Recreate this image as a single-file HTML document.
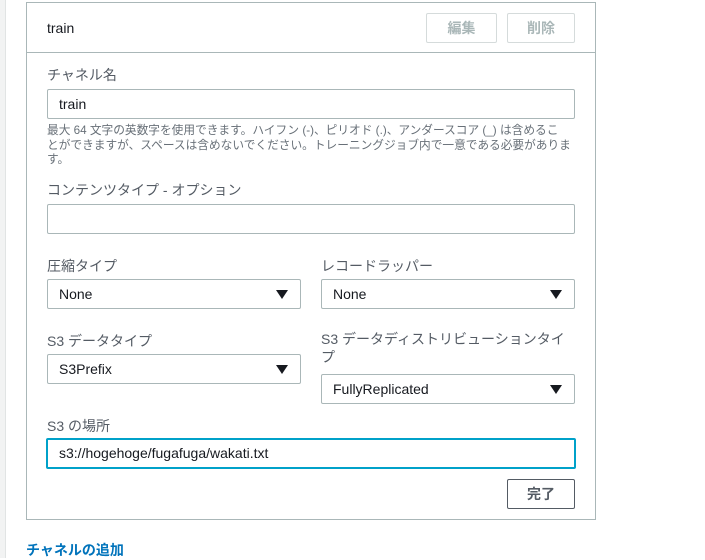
<!DOCTYPE html>
<html><head><meta charset="utf-8"><style>
*{box-sizing:border-box;margin:0;padding:0}
body{width:705px;height:558px;background:#fff;position:relative;overflow:hidden;font-family:"Liberation Sans","Noto Sans CJK JP",sans-serif;color:#16191f}
.a{position:absolute}
.strip{left:0;top:0;width:6px;height:558px;background:#f2f3f3;border-right:1px solid #e1e4e4}
.panel{left:26px;top:2px;width:570px;height:518px;border:1px solid #aab7b8}
.hdr{left:26px;top:52px;width:570px;height:1px;background:#aab7b8}
.btn{border:1px solid #d5dbdb;border-radius:2px;font-size:14px;font-weight:bold;color:#aab7b8;text-align:center;line-height:28px}
.lbl{font-size:14px;color:#545b64;left:47px}
.inp{border:1px solid #aab7b8;border-radius:2px;font-size:14px;line-height:28px;padding-left:11px}
.sel:after{content:"";position:absolute;right:12px;top:10px;border-left:6px solid transparent;border-right:6px solid transparent;border-top:9px solid #16191f}
.help{left:47px;top:124px;font-size:11.7px;line-height:14.5px;color:#687078;white-space:nowrap}
</style></head><body>
<div class="a strip"></div>
<div class="a panel"></div>
<div class="a hdr"></div>
<div class="a" style="left:47px;top:20px;font-size:14px">train</div>
<div class="a btn" style="left:426px;top:13px;width:71px;height:30px">編集</div>
<div class="a btn" style="left:507px;top:13px;width:68px;height:30px">削除</div>
<div class="a lbl" style="top:65px">チャネル名</div>
<div class="a inp" style="left:47px;top:89px;width:528px;height:30px">train</div>
<div class="a help">最大 64 文字の英数字を使用できます。ハイフン (-)、ピリオド (.)、アンダースコア (_) は含めるこ<br>とができますが、スペースは含めないでください。トレーニングジョブ内で一意である必要がありま<br>す。</div>
<div class="a lbl" style="top:180px">コンテンツタイプ - オプション</div>
<div class="a inp" style="left:47px;top:204px;width:528px;height:30px"></div>
<div class="a lbl" style="top:256px">圧縮タイプ</div>
<div class="a lbl" style="top:256px;left:321px">レコードラッパー</div>
<div class="a inp sel" style="left:47px;top:279px;width:254px;height:30px">None</div>
<div class="a inp sel" style="left:321px;top:279px;width:254px;height:30px">None</div>
<div class="a lbl" style="top:331px">S3 データタイプ</div>
<div class="a lbl" style="top:330px;left:321px;width:245px;line-height:18px">S3 データディストリビューションタイプ</div>
<div class="a inp sel" style="left:47px;top:354px;width:254px;height:30px">S3Prefix</div>
<div class="a inp sel" style="left:321px;top:374px;width:254px;height:30px">FullyReplicated</div>
<div class="a lbl" style="top:416px">S3 の場所</div>
<div class="a inp" style="left:46px;top:438px;width:530px;height:31px;border:2px solid #00a1c9;line-height:27px;padding-left:11px">s3://hogehoge/fugafuga/wakati.txt</div>
<div class="a btn" style="left:507px;top:479px;width:68px;height:30px;border-color:#545b64;color:#545b64">完了</div>
<div class="a" style="left:26px;top:540px;font-size:14px;font-weight:bold;color:#0073bb">チャネルの追加</div>
</body></html>
